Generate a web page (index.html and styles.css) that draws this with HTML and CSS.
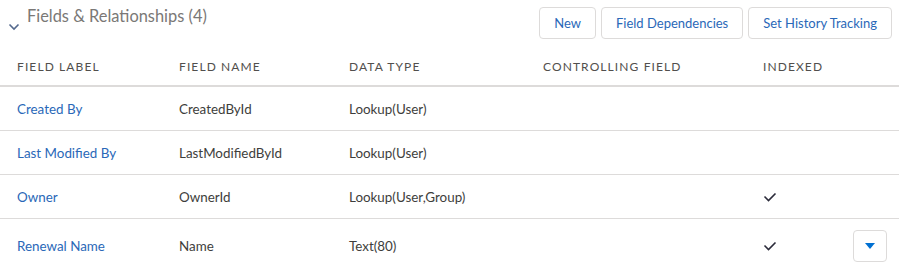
FILE: index.html
```html
<!DOCTYPE html>
<html lang="en">
<head>
  <meta charset="UTF-8">
  <title>Fields &amp; Relationships</title>
  <link rel="stylesheet" href="styles.css">
</head>
<body>
  <section class="card">
    <div class="card-header">
      <h2 class="card-title">
        <svg class="chevron" width="12" height="8" viewBox="0 0 12 8"><path d="M1.5 1.5 L6 6 L10.5 1.5" fill="none" stroke="#54698d" stroke-width="1.6"/></svg>
        <span>Fields &amp; Relationships (4)</span>
      </h2>
      <div class="actions">
        <button class="btn">New</button>
        <button class="btn">Field Dependencies</button>
        <button class="btn">Set History Tracking</button>
      </div>
    </div>

    <table class="fields">
      <colgroup>
        <col style="width:162px">
        <col style="width:170px">
        <col style="width:194px">
        <col style="width:220px">
        <col style="width:90px">
        <col>
      </colgroup>
      <thead>
        <tr>
          <th>Field Label</th>
          <th>Field Name</th>
          <th>Data Type</th>
          <th>Controlling Field</th>
          <th>Indexed</th>
          <th></th>
        </tr>
      </thead>
      <tbody>
        <tr>
          <td><a href="#">Created By</a></td>
          <td>CreatedById</td>
          <td>Lookup(User)</td>
          <td></td>
          <td></td>
          <td></td>
        </tr>
        <tr>
          <td><a href="#">Last Modified By</a></td>
          <td>LastModifiedById</td>
          <td>Lookup(User)</td>
          <td></td>
          <td></td>
          <td></td>
        </tr>
        <tr>
          <td><a href="#">Owner</a></td>
          <td>OwnerId</td>
          <td>Lookup(User,Group)</td>
          <td></td>
          <td><svg class="check" width="14" height="10" viewBox="0 0 14 10"><path d="M1.5 4.5 L5.5 8.5 L12.5 1.5" fill="none" stroke="#2b2b3a" stroke-width="1.6"/></svg></td>
          <td></td>
        </tr>
        <tr class="last">
          <td><a href="#">Renewal Name</a></td>
          <td>Name</td>
          <td>Text(80)</td>
          <td></td>
          <td><svg class="check" width="14" height="10" viewBox="0 0 14 10"><path d="M1.5 4.5 L5.5 8.5 L12.5 1.5" fill="none" stroke="#2b2b3a" stroke-width="1.6"/></svg></td>
          <td><button class="menu-btn"><svg width="10" height="6" viewBox="0 0 10 6"><path d="M0 0 H10 L5 6 Z" fill="#0070d2"/></svg></button></td>
        </tr>
      </tbody>
    </table>
  </section>
</body>
</html>
```

FILE: styles.css
```css
body {
  margin: 0;
  background: #fff;
  font-family: Lato, "Open Sans", sans-serif;
  color: #3e3e3c;
}
.card {
  width: 899px;
}
.card-header {
  display: flex;
  justify-content: space-between;
  align-items: flex-start;
  height: 48px;
  padding: 0 7px 0 8px;
  box-sizing: border-box;
}
.card-title {
  margin: 0;
  display: flex;
  align-items: flex-start;
  font-size: 16.4px;
  font-weight: 400;
  color: #7a7876;
}
.card-title span {
  margin-top: 6px;
  margin-left: 7px;
}
.chevron {
  margin-top: 23px;
}
.actions {
  display: flex;
  gap: 5px;
  margin-top: 7px;
}
.btn {
  height: 32px;
  padding: 0 14px;
  background: #fff;
  border: 1px solid #dddbda;
  border-radius: 4px;
  font-family: inherit;
  font-size: 13px;
  color: #2a68b8;
}
.fields {
  width: 899px;
  border-collapse: collapse;
  table-layout: fixed;
}
.fields th {
  height: 37px;
  padding: 0 0 0 17px;
  text-align: left;
  font-size: 12px;
  font-weight: 400;
  text-transform: uppercase;
  letter-spacing: 1.1px;
  color: #514f4d;
  border-bottom: 2px solid #dddbda;
}
.fields td {
  height: 43px;
  padding: 0 0 0 17px;
  font-size: 13.4px;
  color: #3e3e3c;
  border-bottom: 1px solid #dddbda;
}
.fields tr.last td {
  height: 54px;
  border-bottom: none;
}
.fields a {
  color: #2a68b8;
  text-decoration: none;
}
.check {
  display: block;
}
.menu-btn {
  width: 34px;
  height: 32px;
  display: flex;
  align-items: center;
  justify-content: center;
  background: #fff;
  border: 1px solid #dddbda;
  border-radius: 4px;
  padding: 0;
}
```
